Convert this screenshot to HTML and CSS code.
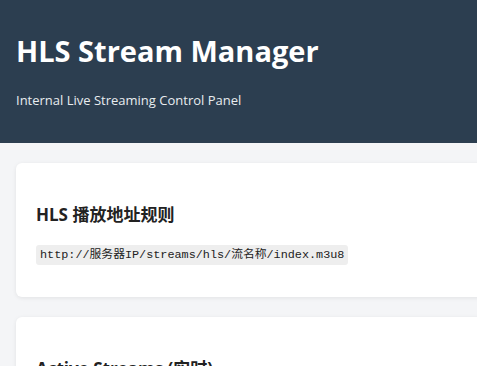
FILE: index.html
```html
<!DOCTYPE html>
<html lang="zh-CN">
<head>
  <meta charset="UTF-8" />
  <meta name="viewport" content="width=device-width, initial-scale=1.0" />
  <title>HLS Stream Manager</title>
  <link rel="stylesheet" href="styles.css">
</head>
<body>

  <header>
    <h1>HLS Stream Manager</h1>
    <p>Internal Live Streaming Control Panel</p>
  </header>

  <main>
    <!-- Regra do endereço -->
    <section class="card">
      <h2>HLS 播放地址规则</h2>
      <p><code>http://服务器IP/streams/hls/流名称/index.m3u8</code></p>
    </section>

    <section class="card">
      <h2>Active Streams (实时)</h2>
      <p>Loading...</p>
    </section>
  </main>

</body>
</html>
```

FILE: styles.css
```css
html, body {
  overflow-x: hidden;
}

body {
  font-family: "Open Sans", "Noto Sans CJK SC", sans-serif;
  margin: 0;
  background-color: #f4f5f7;
  color: #222;
}

header {
  background-color: #2c3e50;
  color: #fff;
  padding: 15px 16px 14px;
}

header h1 {
  font-size: 29px;
  margin: 16px 0 21px;
}

header p {
  font-size: 13px;
  margin: 0 0 20px;
  color: #e8ecef;
}

main {
  width: 900px;
  padding: 20px 16px;
}

.card {
  background-color: #fff;
  border-radius: 6px;
  box-shadow: 0 1px 4px rgba(0, 0, 0, 0.08);
  padding: 20px;
  margin-bottom: 20px;
}

.card h2 {
  font-size: 17px;
  margin: 18px 0 15px;
}

.card p {
  margin: 0 0 14px;
}

code {
  font-family: "Liberation Mono", "Noto Sans CJK SC", monospace;
  font-size: 11.8px;
  background-color: #eee;
  padding: 3px 4px;
  border-radius: 3px;
}
```
